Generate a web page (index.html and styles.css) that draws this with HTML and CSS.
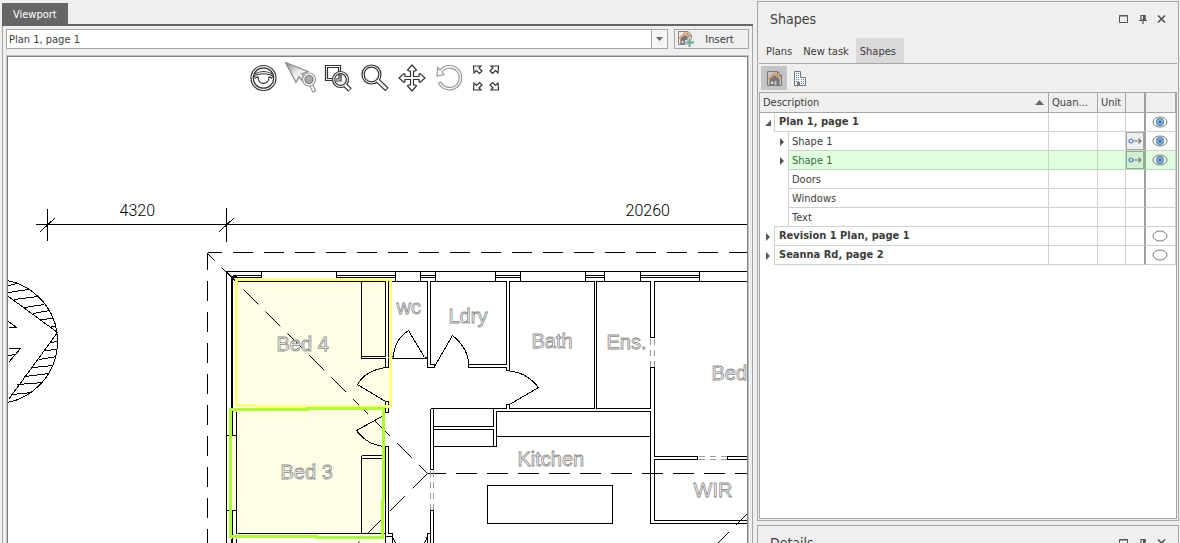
FILE: index.html
```html
<!DOCTYPE html>
<html lang="en">
<head>
<meta charset="utf-8">
<title>Viewport</title>
<link rel="stylesheet" href="styles.css">
</head>
<body>
<svg class="defs" width="0" height="0" aria-hidden="true">
  <defs>
    <linearGradient id="cursor-fill" x1="0" y1="0" x2="1" y2="1"><stop offset="0" stop-color="#888"/><stop offset=".5" stop-color="#f4f4f4"/><stop offset="1" stop-color="#aaa"/></linearGradient>
    <symbol id="eye" viewBox="0 0 16 12"><ellipse cx="8" cy="6" rx="7" ry="5" fill="#fff" fill-opacity=".6" stroke="#777"/><circle cx="8" cy="6" r="4" fill="#4f87c0"/><circle cx="8" cy="6" r="2.3" fill="none" stroke="#c5daf0" stroke-width=".8"/><circle cx="8" cy="6" r="1" fill="#2c5f99"/></symbol>
    <symbol id="eye-off" viewBox="0 0 16 12"><ellipse cx="8" cy="6" rx="7" ry="5" fill="#fff" stroke="#777"/></symbol>
    <symbol id="link" viewBox="0 0 14 8"><circle cx="3" cy="4" r="2" fill="none" stroke="#3f7fc4" stroke-width="1.2"/><path d="M6 4h7M10.500 1.500 13 4l-2.500 2.500" fill="none" stroke="#777" stroke-width="1.100"/></symbol>
    <symbol id="house" viewBox="0 0 15 15"><path d="M.5 14.500V.5h10l4 4v10z" fill="none" stroke="#777"/><path d="M10.500.5v4h4" fill="none" stroke="#777"/><path d="M2.500 8 7.500 4l5 4v6h-3v-4h-2v4h-5z" fill="#777"/><path d="M4 10.500h2V13H4z" fill="#ddd"/><path d="M1 8 7.500 2 14 8" fill="none" stroke="#eb9a54" stroke-width="1.700"/></symbol>
    <symbol id="window" viewBox="0 0 9 8"><path d="M.5.5h8v7h-8zM0 1h9" fill="none" stroke="#555"/></symbol>
    <symbol id="pin" viewBox="0 0 8 9"><path d="M2 .5h4V5H2zM0 5.500h8M4 5.500V9" fill="none" stroke="#555" stroke-width="1.200"/><path d="M4 0h2.500v5H4z" fill="#555"/></symbol>
    <symbol id="close" viewBox="0 0 9 8"><path d="M1 .5 8 7.500M8 .5 1 7.500" stroke="#555" stroke-width="1.600"/></symbol>
  </defs>
</svg>
<div class="app">
  <main class="viewport">
    <div class="viewport-tabs" role="tablist"><button class="viewport-tab" role="tab" aria-selected="true">Viewport</button></div>
    <div class="viewport-body">
      <div class="plan-bar">
        <div class="combo">
          <select aria-label="Plan page"><option>Plan 1, page 1</option><option>Revision 1 Plan, page 1</option><option>Seanna Rd, page 2</option></select>
          <span class="combo-arrow"><svg width="7" height="4"><path d="M0 0h7L3.500 4z" fill="#666"/></svg></span>
        </div>
        <button class="insert"><svg width="16" height="16" viewBox="0 0 16 16"><use href="#house" width="14" height="14"/><path d="M11.500 7v9M7 11.500h9" stroke="#efefef" stroke-width="4"/><path d="M11.500 7.500V16M7.500 11.500H16" stroke="#6aa893" stroke-width="2"/></svg><span>Insert</span></button>
      </div>
      <div class="canvas">
        <svg class="drawing" width="100%" height="100%" role="img" aria-label="Floor plan">
          <g transform="translate(-7.500 -56.500)">
            <path class="room" d="M236 279H390V405H236z"/>
            <path class="room" d="M230 410 383 408 382 537 230 536z"/>
            <g class="ink">
              <path d="M47 208V240M226 207V241M35 224H750M40 231 55 217M219 231 234 217"/>
              <!-- north symbol -->
              <circle cx="-5" cy="341" r="62"/>
              <path d="M8 296 57 332 8 399M8 321 16 327H8M8 348H20L8 362M8 355 15 354M8 285 17 283M8 292 28 289M14 299 37 296M24 307 44 304M33 313 49 310M41 319 53 318M50 326H55M51 342 57 341M44 350 57 349M39 359 56 356M32 367 53 365M24 376 49 373M17 384 43 382M11 394 32 392"/>
              <!-- outer walls -->
              <path d="M750 271H226V545M232 275H261M232 277H261M336 275H395M336 277H395M420 275H435M420 277H435M495 275H520M495 277H520M585 275H604M585 277H604M640 275H699M640 277H699"/>
              <path d="M261 271V281M336 271V281M395 271V281M420 271V281M435 271V281M495 271V281M520 271V281M585 271V281M604 271V281M640 271V281M699 271V281"/>
              <path d="M231 276V409M232 276V435M231 276H236M226 435H236M226 510H236M232 510V545M231 538V545M236 411V533M236 538V545M226 271 236 281"/>
              <!-- bedrooms -->
              <path d="M237 281H385V355M361 281V358M361 356H385M361 358H385V367H388V358H427M388 356H393V358M388 356V281H427V367H434V364H430V281H506V364H468V367H506V370H509V281H594V408H509V404H506V408H430M424 357H427M236 405H385M385 401H388V412H385zM237 533H384M361 455H384M361 458H384M361 455V533M385 543V446H388V533H392V543M384 536H392M427 543V533H430"/>
              <!-- doors -->
              <path d="M393 356Q394 339 408 330L424 357M434 366 452 335Q468 348 468 364M509 371Q525 371 538 387L509 404M385 367Q365 370 357 384L385 401M385 414 356 430Q367 445 385 446M427 536 423 545M392 536 396 545"/>
              <!-- kitchen and ensuite -->
              <path d="M596 408V281H650V337H654V281H750M596 408H650V367H654V456H697V459H654V520H750M430 408V469H433V408M433 426H493V408M433 429H493V446M433 446H496V411H650M496 436H650M650 411V523H750M430 545V510H433V545M487 485H612V523H487zM750 456H727V459H750"/>
              <path d="M747 513 735 525M728 532 717 543"/>
              <!-- roof line -->
              <path stroke-dasharray="20 11" stroke-dashoffset="3" d="M207 252V545"/>
              <path stroke-dasharray="20 11" stroke-dashoffset="6" d="M207 252H750"/>
              <path class="hip" stroke-dasharray="21 10" stroke-dashoffset="11" d="M207 253 427 473"/>
              <path class="hip" stroke-dasharray="21 11" d="M427 473 355 545"/>
              <path stroke-dasharray="21 10" stroke-dashoffset="3" d="M427 473H750"/>
            </g>
            <path class="opening" d="M650 338V366M654 338V366M430 470V509M433 470V509M698 456H726M698 459H726"/>
            <g class="dimension"><text x="119" y="215">4320</text><text x="625" y="215">20260</text></g>
            <g class="room-name"><text x="276" y="350">Bed 4</text><text x="280" y="478">Bed 3</text><text x="396" y="313">wc</text><text x="448" y="322">Ldry</text><text x="531" y="347">Bath</text><text x="606" y="348">Ens.</text><text x="711" y="379">Bed</text><text x="517" y="465">Kitchen</text><text x="693" y="496">WIR</text></g>
            <path class="outline-yellow" d="M236 406V279H390V406M236 405H255M255 406H390"/>
            <path class="outline-green" d="M230 409H307V408H383V500H382V537H316V536H230z"/>
          </g>
        </svg>
        <div class="tools" role="toolbar" aria-label="View tools">
          <button aria-label="Orbit"><svg viewBox="0 0 37 32"><circle cx="18.500" cy="16" r="12.500"/><circle cx="18.500" cy="16" r="10.200"/><path d="M9.500 12Q18.500 7 27.500 12M8.500 16Q10 12.500 13 12.500Q18.500 11 24 12.500Q27 12.500 28.500 16M10 16.500Q12 14.500 13 15C13 23.500 24 23.500 24 15Q25 14.500 27 16.500"/></svg></button>
          <button aria-label="Select and zoom"><svg viewBox="0 0 37 32"><path d="M3.500.5 26 9.500 20 12 28 20 24 23 17 15 14 20.500z" fill="url(#cursor-fill)" stroke="#888"/><path d="M29 22.500 32.500 30" stroke="#888" stroke-width="4"/><path d="M29 22.500 32 29" stroke="#fff" stroke-width="2"/><circle cx="27" cy="17.500" r="6.500" fill="#fff" stroke="#999"/><circle cx="27" cy="17.500" r="4" fill="#aaa" stroke="#777"/></svg></button>
          <button aria-label="Zoom window"><svg viewBox="0 0 37 32"><path d="M6.500 3.500h15v15h-15zM8.500 5.500h11v11h-11z"/><path d="m26 23 5 5" stroke-width="5"/><circle cx="21.500" cy="17.500" r="8" fill="#fff"/><circle cx="21.500" cy="17.500" r="5.800"/><path d="M17 19h5v-6h-2v4h-3"/><path d="m26 23 4.500 4.500" stroke="#fff" stroke-width="2.500"/></svg></button>
          <button aria-label="Zoom"><svg viewBox="0 0 37 32"><path d="m21 18 10 9.500" stroke-width="5"/><circle cx="15.500" cy="12.500" r="9.500" fill="#fff"/><path d="m21.500 18.500 8.800 8.400" stroke="#fff" stroke-width="2.500"/><circle cx="15.500" cy="12.500" r="7.300"/></svg></button>
          <button aria-label="Pan"><svg viewBox="0 0 37 32"><path d="m19 3 4.500 5-1 1H20.500v5.500H26v-2l1-1 5 4.500-5 4.500-1-1v-2h-5.500V23h2l1 1-4.500 5-4.500-5 1-1h2v-5.500H12v2l-1 1L6 16l5-4.500 1 1v2h5.500V9h-2l-1-1z"/></svg></button>
          <button class="faint" aria-label="Undo"><svg viewBox="0 0 37 32"><path d="M7.500 5.500 10 8A12.200 12.200 0 1 1 8.500 21L11 20A9.600 9.600 0 1 0 12 10L14 12.500 7 14z"/></svg></button>
          <button aria-label="Fit to view"><svg viewBox="0 0 37 32"><g id="corner"><path d="M6.500 4H14l-2 2 3 3-2.500 2.500-3-3-2.500 2.500z"/></g><use href="#corner" transform="matrix(-1 0 0 1 38 0)"/><use href="#corner" transform="matrix(1 0 0 -1 0 32)"/><use href="#corner" transform="matrix(-1 0 0 -1 38 32)"/></svg></button>
        </div>
      </div>
    </div>
  </main>
  <aside class="side">
    <section class="panel shapes">
      <header class="panel-head"><h2>Shapes</h2>
        <button aria-label="Maximize"><svg width="9" height="8"><use href="#window"/></svg></button><button aria-label="Pin"><svg width="8" height="9"><use href="#pin"/></svg></button><button aria-label="Close"><svg width="9" height="8"><use href="#close"/></svg></button>
      </header>
      <nav class="tabs" role="tablist"><button role="tab">Plans</button><button role="tab">New task</button><button role="tab" aria-selected="true">Shapes</button></nav>
      <div class="modes">
        <button class="on" aria-label="By plan"><svg width="15" height="15"><use href="#house"/></svg></button>
        <button aria-label="By building"><svg width="12" height="15" viewBox="0 0 12 15"><path d="M.5 14.500V.5h6v6h5v8z" fill="#fff" stroke="#777"/><path d="M2.500 2v10M4.500 2v10M7.500 8v5M9.500 8v5" stroke="#3f7fc4" stroke-dasharray="1 1"/><path d="M3 11h3v4H3z" fill="#777"/></svg></button>
      </div>
      <div class="grid">
        <table>
          <colgroup><col><col class="c-quantity"><col class="c-unit"><col class="c-link"><col class="c-eye"></colgroup>
          <thead><tr><th><div class="sorted">Description<svg width="9" height="5"><path d="M0 5h9L4.500 0z" fill="#666"/></svg></div></th><th>Quan...</th><th>Unit</th><th></th><th></th></tr></thead>
          <tbody>
            <tr class="group"><td><div class="node"><i><svg width="6" height="6"><path d="M6 0v6H0z"/></svg></i><span>Plan 1, page 1</span></div></td><td></td><td></td><td></td><td><button class="eye" aria-label="Hide"><svg width="16" height="12"><use href="#eye"/></svg></button></td></tr>
            <tr><td><div class="node"><i></i><i><svg width="4" height="8"><path d="M0 0v8l4-4z"/></svg></i><span>Shape 1</span></div></td><td></td><td></td><td><button class="link" aria-label="Link"><svg width="14" height="8"><use href="#link"/></svg></button></td><td><button class="eye" aria-label="Hide"><svg width="16" height="12"><use href="#eye"/></svg></button></td></tr>
            <tr class="selected"><td><div class="node"><i></i><i><svg width="4" height="8"><path d="M0 0v8l4-4z"/></svg></i><span>Shape 1</span></div></td><td></td><td></td><td><button class="link" aria-label="Link"><svg width="14" height="8"><use href="#link"/></svg></button></td><td><button class="eye" aria-label="Hide"><svg width="16" height="12"><use href="#eye"/></svg></button></td></tr>
            <tr><td><div class="node"><i></i><i></i><span>Doors</span></div></td><td></td><td></td><td></td><td></td></tr>
            <tr><td><div class="node"><i></i><i></i><span>Windows</span></div></td><td></td><td></td><td></td><td></td></tr>
            <tr><td><div class="node"><i></i><i class="end"></i><span>Text</span></div></td><td></td><td></td><td></td><td></td></tr>
            <tr class="group"><td><div class="node"><i><svg width="4" height="8"><path d="M0 0v8l4-4z"/></svg></i><span>Revision 1 Plan, page 1</span></div></td><td></td><td></td><td></td><td><button class="eye" aria-label="Show"><svg width="16" height="12"><use href="#eye-off"/></svg></button></td></tr>
            <tr class="group"><td><div class="node"><i><svg width="4" height="8"><path d="M0 0v8l4-4z"/></svg></i><span>Seanna Rd, page 2</span></div></td><td></td><td></td><td></td><td><button class="eye" aria-label="Show"><svg width="16" height="12"><use href="#eye-off"/></svg></button></td></tr>
          </tbody>
        </table>
      </div>
    </section>
    <section class="panel details">
      <header class="panel-head"><h2>Details</h2>
        <button aria-label="Maximize"><svg width="9" height="8"><use href="#window"/></svg></button><button aria-label="Pin"><svg width="8" height="9"><use href="#pin"/></svg></button><button aria-label="Close"><svg width="9" height="8"><use href="#close"/></svg></button>
      </header>
    </section>
  </aside>
</div>
</body>
</html>
```
FILE: styles.css
```css
* { box-sizing: border-box; }
body {
  margin: 0;
  background: #efefef;
  color: #3c3c3c;
  font: 11px/14px "DejaVu Sans Condensed", "DejaVu Sans", sans-serif;
}
button, select { font: inherit; color: inherit; border: 0; padding: 0; margin: 0; background: none; border-radius: 0; }
svg { display: block; }
.defs { position: absolute; }
.app { display: flex; gap: 4px; height: 100vh; padding: 0 1px 0 2px; overflow: hidden; }

.viewport { flex: 1; min-width: 0; display: flex; flex-direction: column; padding-top: 3px; }
.viewport-tabs { display: flex; border-bottom: 2px solid #666; }
.viewport-tab { height: 21px; padding: 2px 11px 0; background: #666; color: #fff; }
.viewport-body { flex: 1; min-height: 0; display: flex; flex-direction: column; gap: 6px; padding: 3px 3px 0; border: solid #a6a6a6; border-width: 0 1px; }
.plan-bar { display: flex; gap: 6px; }
.combo { flex: 1; display: flex; height: 20px; border: 1px solid #a6a6a6; background: #fff; }
.combo select { flex: 1; appearance: none; padding: 2px 2px 0; outline: 0; }
.combo-arrow { width: 16px; display: grid; place-items: center; border-left: 1px solid #a6a6a6; background: #f4f4f4; }
.insert { width: 75px; height: 20px; display: flex; align-items: center; padding: 0 3px; border: 1px solid #a6a6a6; }
.insert span { flex: 1; text-align: center; padding-top: 1px; }

.canvas { flex: 1; min-height: 0; position: relative; overflow: hidden; background: #fff; border: solid #808080; border-width: 1px 1px 0; outline: 1px solid #c0c0c0; margin: 1px 1px 0; }
.drawing { position: absolute; inset: 0; }
.room { fill: #ffffe6; }
.ink { fill: none; stroke: #000; shape-rendering: crispEdges; }
.hip { shape-rendering: auto; }
.opening { fill: none; stroke: #999; stroke-dasharray: 6 5; shape-rendering: crispEdges; }
.outline-yellow, .outline-green { fill: none; stroke-width: 3; shape-rendering: crispEdges; }
.outline-yellow { stroke: #ffff80; }
.outline-green { stroke: #adff2f; }
.dimension { font: 300 16px Roboto, sans-serif; fill: #000; }
.room-name { font: 20px "Liberation Sans", Arial, sans-serif; fill: #fff; stroke: #8a8a8a; stroke-width: 0.8; }
.tools { position: absolute; top: 5px; left: 0; right: 7px; display: flex; justify-content: center; }
.tools button { width: 37px; height: 32px; }
.tools svg { width: 37px; height: 32px; fill: none; stroke: #333; stroke-width: 1.2; }
.tools .faint svg { stroke: #999; }

.side { flex: 0 0 422px; display: flex; flex-direction: column; gap: 4px; padding-top: 1px; }
.panel { display: flex; flex-direction: column; border: 1px solid #a6a6a6; }
.shapes { flex: 1; min-height: 0; padding-bottom: 1px; }
.details { flex: 0 0 18px; border-bottom: 0; overflow: hidden; }
.panel-head { flex: none; display: flex; align-items: center; gap: 4px; height: 34px; padding: 0 9px 0 12px; }
.shapes .panel-head { margin-bottom: 2px; }
.panel-head h2 { flex: 1; margin: 0; font-size: 14px; line-height: 18px; font-weight: normal; }
.panel-head button { width: 15px; height: 16px; display: grid; place-items: center; }
.tabs { display: flex; gap: 3px; height: 26px; padding: 0 3px; margin: 0 1px; border-bottom: 1px solid #a6a6a6; }
.tabs button { padding: 2px 4px 0; }
.tabs button[aria-selected] { background: #d9d9d9; padding-right: 8px; }
.modes { display: flex; padding: 2px 3px; height: 28px; }
.modes button { width: 26px; display: grid; place-items: center; }
.modes .on { background: #c4c4c4; }

.grid { flex: 1; min-height: 0; margin: 0 1px; border: 1px solid #a6a6a6; background: #fff; overflow: hidden; }
table { width: 100%; table-layout: fixed; border-collapse: separate; border-spacing: 0; }
.c-quantity { width: 49px; }
.c-unit { width: 28px; }
.c-link { width: 20px; }
.c-eye { width: 30px; }
th { height: 20px; padding: 0 3px; background: #efefef; border: solid #a6a6a6; border-width: 0 1px 1px 0; font-weight: normal; text-align: left; white-space: nowrap; overflow: hidden; }
td { height: 19px; padding: 0; border: solid #d0d0d0; border-width: 0 1px 1px 0; }
td:first-child { border-bottom: 0; }
th:nth-child(4), td:nth-child(4) { border-right: 2px solid #a0a0a0; }
.sorted { display: flex; align-items: center; justify-content: space-between; padding-right: 1px; }
.node { display: flex; height: 19px; }
.node i { width: 14px; display: grid; place-items: center; padding-left: 2px; }
.node path { fill: #555; }
.node .end { border-bottom: 1px solid #d0d0d0; }
.node span { flex: 1; padding: 3px 3px 0; border: solid #d0d0d0; border-width: 0 0 1px 1px; white-space: nowrap; }
.node span { line-height: 14px; }
.group .node span { font-weight: bold; padding: 2px 4px 0; }
.eye { width: 28px; height: 18px; display: grid; place-items: center; }
.link { width: 18px; height: 18px; display: grid; place-items: center; border: 1px solid #a6a6a6; background: #efefef; }
.selected td:not(:first-child), .selected .node span { background: #dfffdf; border-bottom-color: #b8d8b8; }
.selected td { border-right-color: #b8d8b8; }
.selected span { color: #3c6c3c; }
.selected td:nth-child(4) { border-right-color: #90b090; }
.selected .link { background: #d3efd3; border-color: #8fb58f; }
```
